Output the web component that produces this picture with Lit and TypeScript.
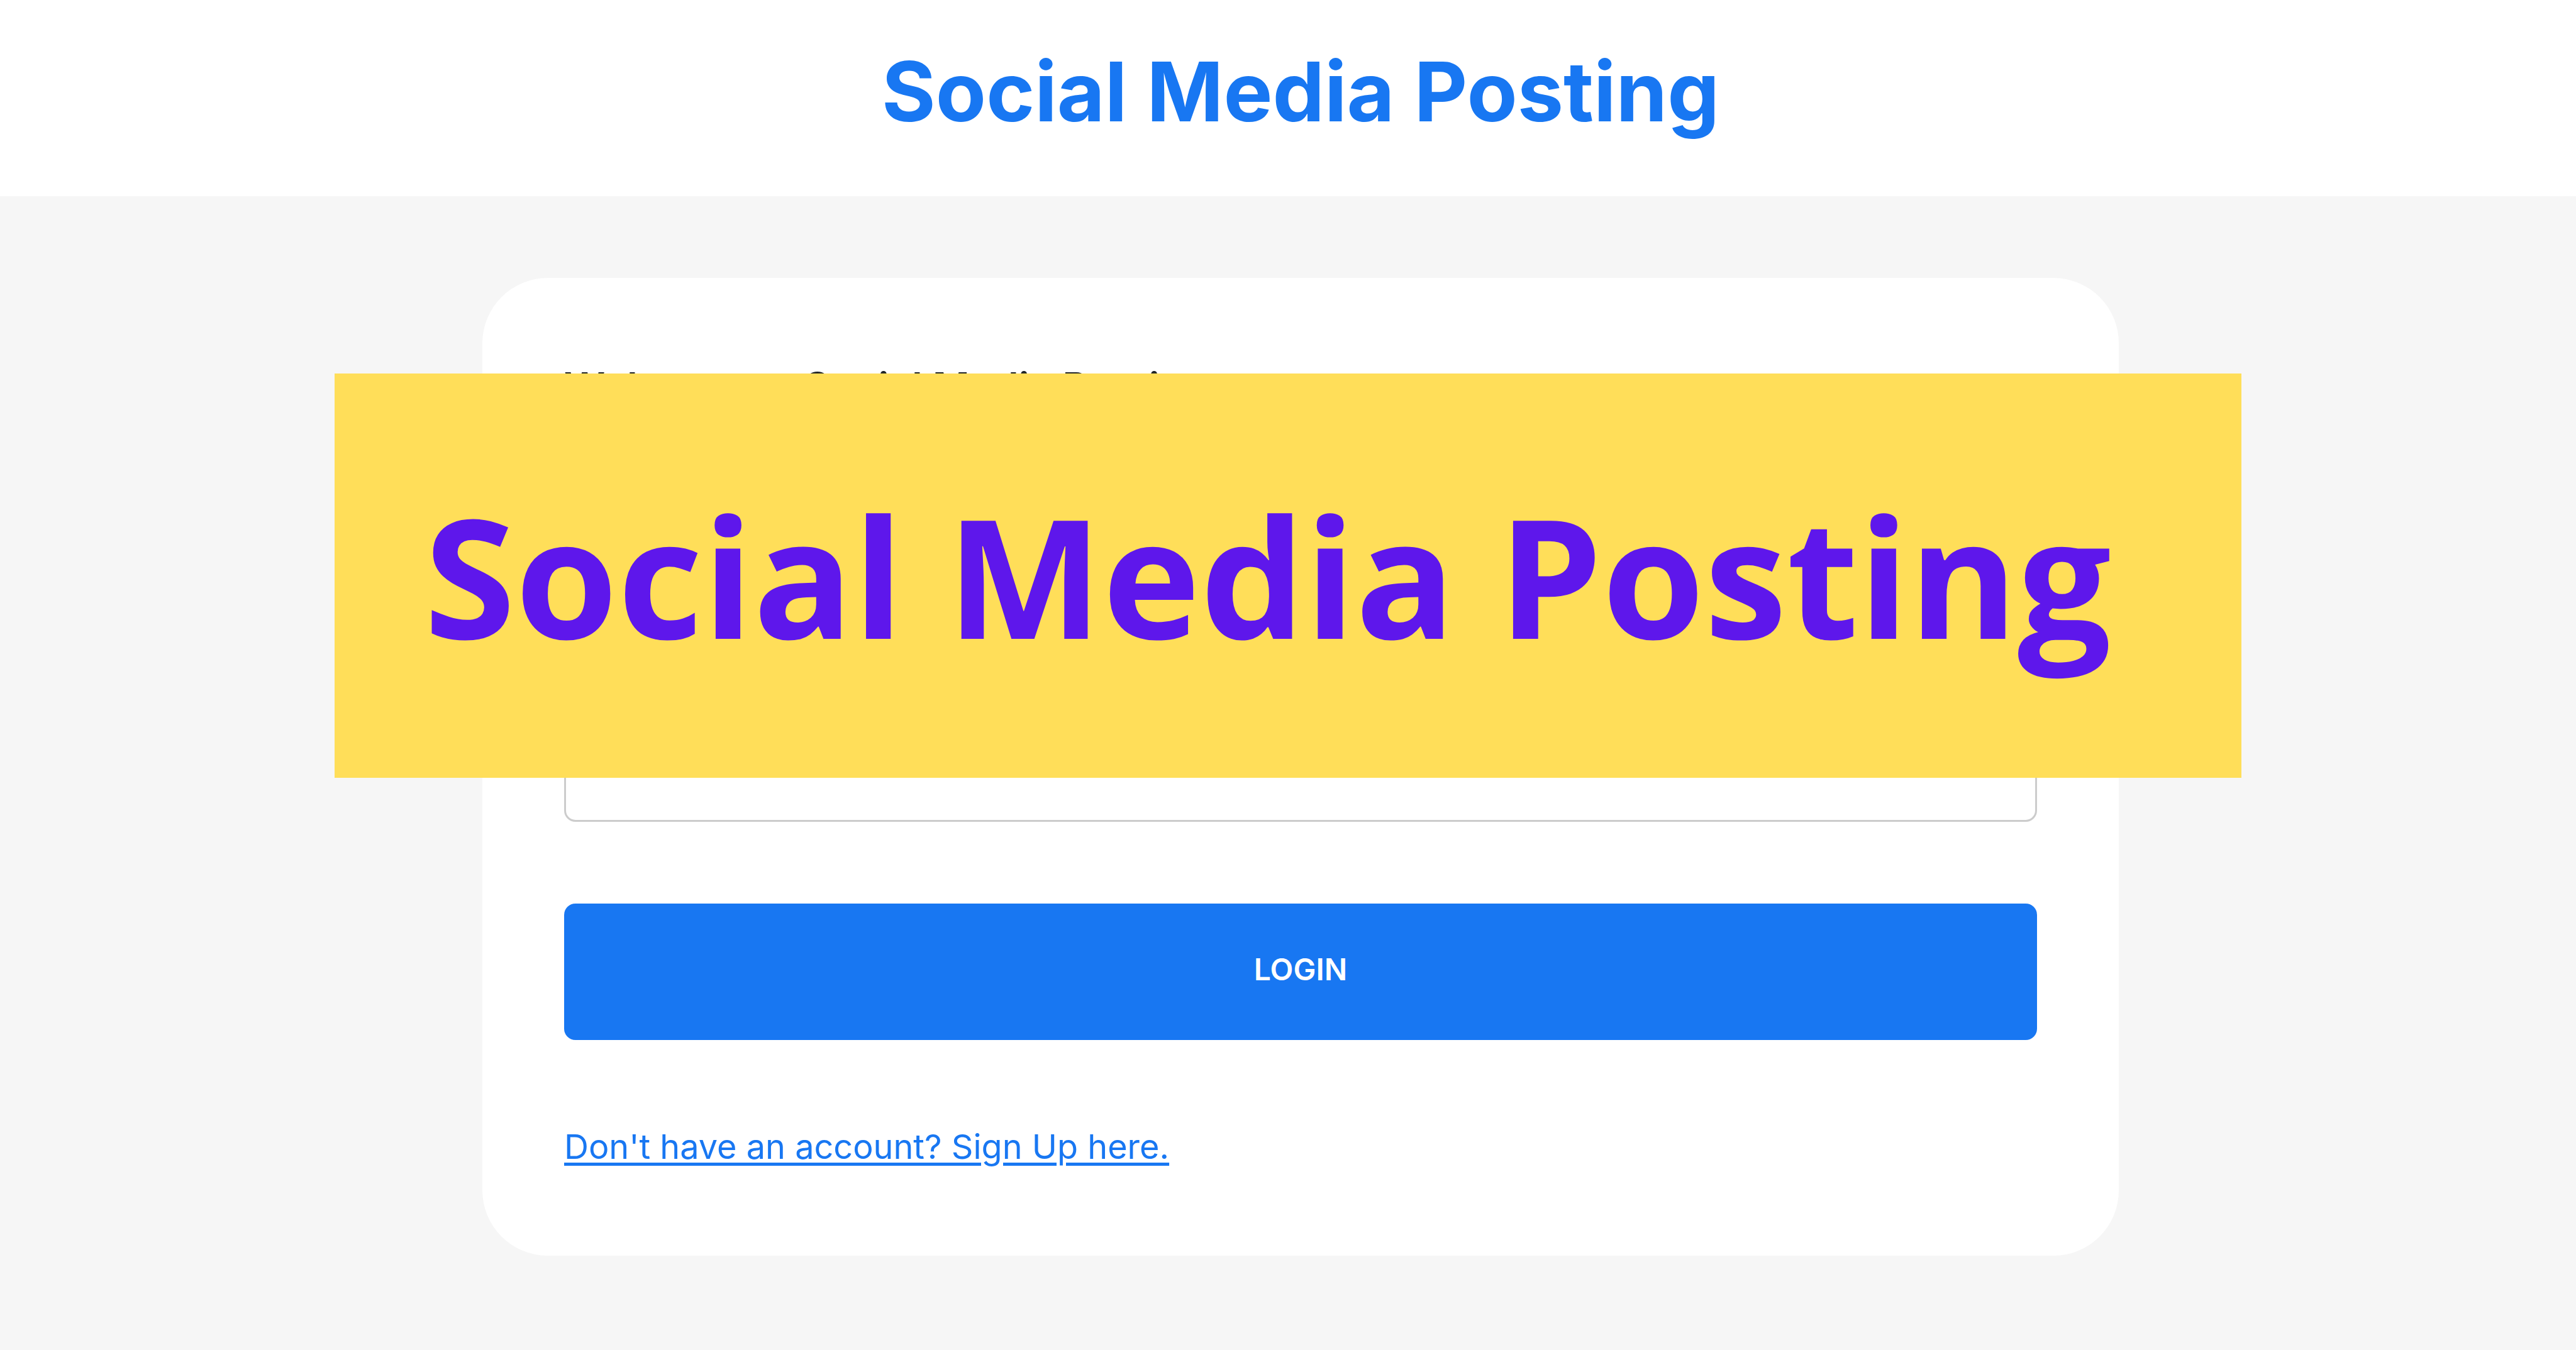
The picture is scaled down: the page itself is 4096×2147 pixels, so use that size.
import { LitElement, html, css } from "lit";
import { customElement } from "lit/decorators.js";

@customElement("app-root")
class AppRoot extends LitElement {
  static styles = css`
    :host {
      display: flex;
      flex-direction: column;
      position: relative;
      min-height: 100vh;
      background: #f6f6f6;
      color: #212529;
      font-family: Inter, "Liberation Sans", sans-serif;
    }
    * {
      box-sizing: border-box;
    }
    .header {
      padding: 68px 0 88px 40px;
      background: #fff;
      text-align: center;
    }
    .brand {
      margin: 0;
      color: #1877f2;
      font-size: 131px;
      line-height: 156px;
      font-weight: 700;
    }
    .main {
      display: flex;
      justify-content: center;
      padding: 130px 0 130px 40px;
    }
    .card {
      display: flex;
      flex-direction: column;
      gap: 130px;
      width: 100%;
      max-width: 2602px;
      padding: 130px;
      border-radius: 104px;
      background: #fff;
    }
    .welcome {
      margin: 0;
      padding-top: 4px;
      font-size: 64px;
      line-height: 79px;
      font-weight: 600;
    }
    .field {
      width: 100%;
      height: 196px;
      padding: 0 52px;
      border: 3px solid #ccc;
      border-radius: 18px;
      background: #fff;
      color: inherit;
      font: inherit;
      font-size: 54px;
    }
    .submit {
      height: 217px;
      padding: 0 0 8px;
      border: 0;
      border-radius: 18px;
      background: #1877f2;
      color: #fff;
      font: inherit;
      font-size: 48px;
      line-height: 64px;
      font-weight: 600;
      text-transform: uppercase;
      cursor: pointer;
    }
    .signup {
      align-self: flex-start;
      padding-bottom: 4px;
      color: #1877f2;
      font-size: 54px;
      line-height: 79px;
      text-decoration: underline;
      text-decoration-thickness: 5px;
      text-underline-offset: 6px;
    }
    .banner {
      position: absolute;
      top: 594px;
      left: 13%;
      right: 13%;
      display: flex;
      align-items: center;
      height: 643px;
      padding: 0 0 4px 142px;
      background: #ffde59;
      color: #5e17eb;
      font-family: "Open Sans", sans-serif;
      font-size: 263px;
      line-height: 360px;
      font-weight: 700;
      white-space: nowrap;
    }
  `;

  render() {
    return html`
      <header class="header"><h1 class="brand">Social Media Posting</h1></header>
      <main class="main">
        <form class="card" @submit=${(e: Event) => e.preventDefault()}>
          <h2 class="welcome">Welcome to Social Media Posting</h2>
          <input class="field" type="email" aria-label="Email" />
          <input class="field" type="password" aria-label="Password" />
          <button class="submit" type="submit">Login</button>
          <a class="signup" href="#signup">Don't have an account? Sign Up here.</a>
        </form>
      </main>
      <div class="banner">Social Media Posting</div>
    `;
  }
}
